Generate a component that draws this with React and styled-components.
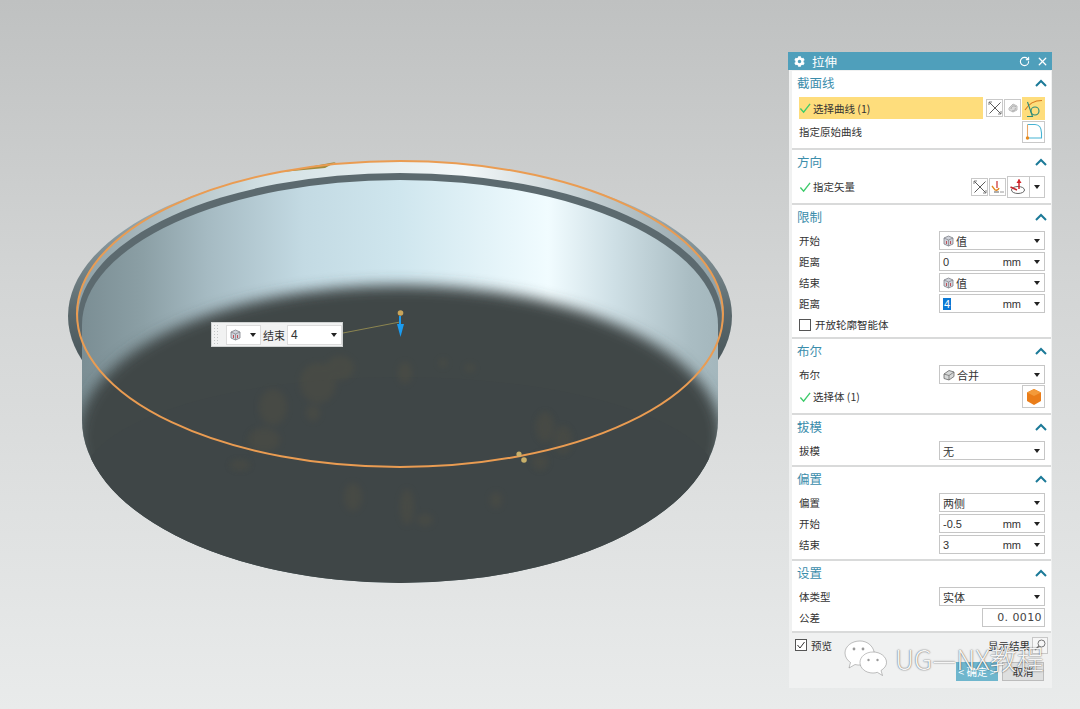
import React from 'react';
import styled, { createGlobalStyle } from 'styled-components';
import { RotateCw, X } from 'lucide-react';
import { FaCog } from 'react-icons/fa';

const Global = createGlobalStyle`
  html, body { margin: 0; padding: 0; overflow: hidden; }
  body { font-family: "Noto Sans CJK SC", "Liberation Sans", sans-serif; }
`;

const Viewport = styled.div`
  position: relative;
  width: 1080px;
  height: 709px;
  overflow: hidden;
  background: linear-gradient(180deg, #bfc1c1 0%, #d3d5d5 40%, #e9ebeb 100%);
`;

const ModelSvg = styled.svg`
  position: absolute;
  inset: 0;
`;

const FloatBar = styled.div`
  position: absolute;
  left: 211px;
  top: 322px;
  width: 132px;
  height: 25px;
  box-sizing: border-box;
  display: flex;
  align-items: center;
  gap: 2px;
  background: #f1f2f2;
  border: 1px solid #cfd2d2;
  font-size: 11px;
  color: #333;
`;

const Grip = styled.div`
  width: 6px;
  height: 21px;
  margin: 0 5px 0 1px;
  background-image: radial-gradient(#c3c6c6 1px, transparent 1px);
  background-size: 3px 3px;
`;

const FloatSelect = styled.div`
  width: ${p => p.$w}px;
  height: 20px;
  box-sizing: border-box;
  display: flex;
  align-items: center;
  justify-content: space-between;
  padding: 0 4px 0 3px;
  background: #fff;
  border: 1px solid #dcdcdc;
  font-family: "Liberation Sans", sans-serif;
  font-size: 12px;
`;

const FloatLabel = styled.span`
  white-space: nowrap;
`;

const Dialog = styled.div`
  position: absolute;
  left: 788px;
  top: 52px;
  width: 264px;
  color: #333;
  font-size: 10.5px;
`;

const TitleBar = styled.div`
  height: 18px;
  display: flex;
  align-items: center;
  gap: 7px;
  padding: 0 3px 0 6px;
  background: #4f9fbb;
  color: #fff;
  font-size: 12.5px;
`;

const TitleText = styled.span`
  flex: 1;
`;

const TitleTools = styled.div`
  display: flex;
  align-items: center;
  gap: 6px;
`;

const Panel = styled.div`
  margin-left: 1px;
  padding: 1px 1px 0 3px;
  background: #f0f1f1;
`;

const Section = styled.section`
  height: ${p => p.$h}px;
  box-sizing: border-box;
  padding: 0 6px 0 7px;
  background: #fff;
  border-bottom: 2px solid #d9dada;
`;

const Header = styled.div`
  height: 25px;
  box-sizing: border-box;
  padding-bottom: 2px;
  margin: 0 -2px;
  display: flex;
  align-items: center;
  justify-content: space-between;
  color: #3b8dab;
  font-size: 12.5px;
`;

const Row = styled.div`
  height: ${p => p.$h || 21}px;
  display: flex;
  align-items: center;
  justify-content: space-between;
`;

const Label = styled.span`
  display: flex;
  align-items: center;
  gap: 2px;
  white-space: nowrap;
`;

const Active = styled.div`
  width: 184px;
  height: 22px;
  display: flex;
  align-items: center;
  gap: 2px;
  background: #fedd7c;
`;

const Tools = styled.div`
  display: flex;
  align-items: center;
  gap: 1px;
`;

const Tool = styled.div`
  width: ${p => p.$w || 17}px;
  height: ${p => p.$tall || 18}px;
  box-sizing: border-box;
  display: flex;
  align-items: center;
  justify-content: center;
  background: ${p => (p.$on ? '#fedd7c' : '#fff')};
  border: 1px solid ${p => (p.$on ? '#fedd7c' : '#c9c9c9')};
`;

const Split = styled.div`
  width: 38px;
  height: 22px;
  box-sizing: border-box;
  display: flex;
  align-items: center;
  border: 1px solid #c9c9c9;
`;

const SplitMain = styled.div`
  width: 21px;
  height: 100%;
  display: flex;
  align-items: center;
  justify-content: center;
  border-right: 1px solid #c9c9c9;
`;

const SplitCaret = styled.div`
  flex: 1;
  display: flex;
  justify-content: center;
`;

const Field = styled.div`
  width: ${p => p.$w || 106}px;
  height: 19px;
  box-sizing: border-box;
  display: flex;
  align-items: center;
  gap: 2px;
  padding: 0 4px 0 3px;
  background: #fff;
  border: 1px solid #c6c6c6;
  font-size: 10.5px;
`;

const Value = styled.span`
  flex: 1;
  font-family: "Liberation Sans", "Noto Sans CJK SC", sans-serif;
  font-size: 11px;
`;

const Selected = styled.span`
  background: #0b78d4;
  color: #fff;
  padding: 0 1px;
`;

const Unit = styled.span`
  margin-right: 11px;
  font-family: "Liberation Sans", sans-serif;
  font-size: 11px;
`;

const Caret = styled.i`
  width: 0;
  height: 0;
  border-left: 3px solid transparent;
  border-right: 3px solid transparent;
  border-top: 4px solid #222;
`;

const Tolerance = styled(Field)`
  justify-content: flex-end;
  padding-right: 2px;
  font-family: "DejaVu Sans", sans-serif;
  font-size: 11px;
  color: #444;
  letter-spacing: 0.4px;
`;

const CheckBox = styled.span`
  width: 12px;
  height: 12px;
  box-sizing: border-box;
  display: inline-flex;
  align-items: center;
  justify-content: center;
  background: #fff;
  border: 1px solid #555;
  margin-right: 2px;
`;

const Footer = styled.div`
  height: 55px;
  padding: 3px 3px 0 3px;
  box-sizing: border-box;
`;

const FooterTop = styled.div`
  height: 18px;
  display: flex;
  align-items: center;
  justify-content: space-between;
`;

const ResultLink = styled.div`
  display: flex;
  align-items: center;
  gap: 2px;
`;

const FooterButtons = styled.div`
  margin: 8px 4px 0 0;
  display: flex;
  justify-content: flex-end;
  gap: 4px;
`;

const Button = styled.div`
  width: 42px;
  height: 19px;
  box-sizing: border-box;
  display: flex;
  align-items: center;
  justify-content: center;
  background: ${p => (p.$primary ? '#6fb6cd' : '#dedfdf')};
  border: 1px solid ${p => (p.$primary ? '#6fb6cd' : '#bcbcbc')};
  color: ${p => (p.$primary ? '#fff' : '#333')};
`;

const Watermark = styled.div`
  position: absolute;
  left: 844px;
  top: 638px;
  display: flex;
  align-items: center;
  gap: 7px;
`;

const WatermarkText = styled.span`
  color: rgba(255, 255, 255, 0.95);
  font-size: 27px;
  font-weight: 300;
  line-height: 42px;
  white-space: nowrap;
  text-shadow: 0 0 1.5px rgba(0, 0, 0, 0.8);
`;

const Check = () => (
  <svg width="12" height="12" viewBox="0 0 13 12">
    <path d="M1.5 6.5 L5 10.5 L12 1.5" fill="none" stroke="#3ecb6b" strokeWidth="1.5" />
  </svg>
);

const Chevron = () => (
  <svg width="12" height="8" viewBox="0 0 12 8">
    <path d="M1 7 L6 2 L11 7" fill="none" stroke="#1c7a98" strokeWidth="2" />
  </svg>
);

const ValueIcon = () => (
  <svg width="11" height="12" viewBox="0 0 11 12">
    <path d="M5.5 1 L10 3 V9 L5.5 11 L1 9 V3 Z" fill="#cfd2da" stroke="#7e8088" strokeWidth="0.8" />
    <path d="M1 3 L5.5 5 L10 3 M5.5 5 V11" fill="none" stroke="#7e8088" strokeWidth="0.7" />
    <path d="M3.5 6 V9 M7.5 6 V9" stroke="#c0424a" strokeWidth="0.9" />
  </svg>
);

const UniteIcon = () => (
  <svg width="12" height="12" viewBox="0 0 12 12">
    <path d="M1 5 L6 1.5 L11 3 V7.5 L6 11 L1 9.5 Z" fill="#d6d8d8" stroke="#666" strokeWidth="0.8" />
    <path d="M1 5 L6 6.5 L11 3 M6 6.5 V11" fill="none" stroke="#666" strokeWidth="0.7" />
  </svg>
);

const CrossIcon = () => (
  <svg width="14" height="14" viewBox="0 0 14 14">
    <path d="M1.5 1.5 L12.5 12.5 M12.5 1.5 L1.5 12.5" stroke="#4a4a4a" strokeWidth="0.9" />
    <path d="M1 4 V1 H4 M10 13 H13 V10" fill="none" stroke="#4a4a4a" strokeWidth="0.7" />
  </svg>
);

const LayerIcon = () => (
  <svg width="12" height="12" viewBox="0 0 12 12">
    <path d="M2 6 L6 2 L10 4 V8 L6 10 L2 8 Z" fill="#dadada" stroke="#bdbdbd" />
    <path d="M4 7 C4 4 7 3 9 5 M5 9 C8 9 9 7 8 6" fill="none" stroke="#a8a8a8" />
  </svg>
);

const CurveIcon = () => (
  <svg width="21" height="21" viewBox="0 0 21 21">
    <circle cx="12" cy="13" r="4" fill="none" stroke="#2d8a7a" strokeWidth="1.1" />
    <path d="M2 12 C6 5 12 2.5 19 2.5" fill="none" stroke="#d97a20" strokeWidth="1.1" />
    <path d="M4.5 4 L9.5 18.5 H4" fill="none" stroke="#2d8a7a" strokeWidth="1.1" />
  </svg>
);

const OriginIcon = () => (
  <svg width="20" height="20" viewBox="0 0 20 20">
    <path d="M3.5 2.5 H11 C15 2.5 17.5 6 17.5 11 V16 H3.5" fill="none" stroke="#46b3d3" strokeWidth="1.1" />
    <path d="M3.5 2.5 V16" stroke="#e9a765" strokeWidth="1.1" />
    <circle cx="3.5" cy="16" r="1.7" fill="#e78a1f" />
  </svg>
);

const OrientIcon = () => (
  <svg width="13" height="14" viewBox="0 0 13 14">
    <path d="M6 1 V8" stroke="#cc2b2b" strokeWidth="1.2" />
    <path d="M1 6 L4 10 Q7 11 8 8" fill="none" stroke="#e2861c" strokeWidth="1.3" />
    <path d="M3 12 H8" stroke="#333" strokeWidth="0.8" />
    <path d="M9.5 12 H10.5 M11.5 12 H12.5" stroke="#333" />
  </svg>
);

const VectorIcon = () => (
  <svg width="19" height="19" viewBox="0 0 19 19">
    <ellipse cx="9" cy="13" rx="6.5" ry="3.5" fill="none" stroke="#555" strokeWidth="0.9" />
    <path d="M10 12 V2.5" stroke="#d0262c" strokeWidth="1.5" />
    <path d="M7.5 6 L10 2 L12.5 6 Z" fill="#d0262c" />
    <path d="M1.5 10 L8 13" stroke="#c7262c" strokeWidth="1.6" />
  </svg>
);

const SolidIcon = () => (
  <svg width="18" height="18" viewBox="0 0 18 18">
    <path d="M9 1 L16 4.5 V13 L9 17 L2 13 V4.5 Z" fill="#ea7d19" />
    <path d="M2 4.5 L9 8 L16 4.5 L9 1 Z" fill="#f39a3a" />
  </svg>
);

const Tick = () => (
  <svg width="10" height="10" viewBox="0 0 10 10">
    <path d="M1.5 5 L4 8 L8.5 2" fill="none" stroke="#333" strokeWidth="1" />
  </svg>
);

const Magnifier = () => (
  <svg width="16" height="17" viewBox="0 0 16 17">
    <rect x="0.5" y="0.5" width="15" height="16" fill="#f6f6f6" stroke="#c8c8c8" />
    <circle cx="9.5" cy="6.5" r="3.5" fill="none" stroke="#777" />
    <path d="M7 9 L3 13" stroke="#777" strokeWidth="1.4" />
  </svg>
);

const WeChat = () => (
  <svg width="44" height="42" viewBox="0 0 44 42">
    <g fill="rgba(255,255,255,0.96)" stroke="rgba(80,80,80,0.5)" strokeWidth="0.7">
      <path d="M16 3 C7.5 3 1 8.5 1 15 C1 19 3.3 22.3 6.5 24.5 L5 30 L11 26.5 C13 27 15 27.2 17 27 L30 13.5 C28.5 7.5 23 3 16 3 Z" />
      <path d="M29 14 C21.5 14 16 18.8 16 24.5 C16 30.2 21.5 35 29 35 C30.5 35 32 34.8 33.3 34.3 L38.5 37.5 L37 32.5 C40.5 30.3 42.5 27.6 42.5 24.5 C42.5 18.8 36.5 14 29 14 Z" />
    </g>
    <g fill="#9a9a9a">
      <circle cx="10" cy="11" r="1.4" />
      <circle cx="19" cy="11" r="1.4" />
      <circle cx="24.5" cy="22" r="1.2" />
      <circle cx="33.5" cy="22" r="1.2" />
    </g>
  </svg>
);

const stains = [
  [318, 383, 18, 20], [340, 368, 14, 12], [273, 407, 14, 18], [264, 440, 16, 12],
  [313, 413, 7, 8], [405, 373, 7, 11], [443, 363, 4, 4], [470, 368, 5, 4],
  [545, 427, 9, 15], [563, 440, 9, 14], [540, 462, 8, 8], [353, 497, 9, 14],
  [407, 507, 7, 18], [425, 520, 8, 6], [496, 500, 6, 8], [240, 465, 10, 5],
];

const Model = () => (
  <ModelSvg width="1080" height="709" viewBox="0 0 1080 709">
    <defs>
      <linearGradient id="wall" x1="78" x2="722" y1="0" y2="0" gradientUnits="userSpaceOnUse">
        <stop offset="0" stopColor="#7a8d93" />
        <stop offset="0.1" stopColor="#8b9fa5" />
        <stop offset="0.2" stopColor="#a5bac2" />
        <stop offset="0.35" stopColor="#c3dae3" />
        <stop offset="0.5" stopColor="#cfe6ee" />
        <stop offset="0.73" stopColor="#f1fcff" />
        <stop offset="0.83" stopColor="#cfe0e6" />
        <stop offset="0.95" stopColor="#aabdc3" />
        <stop offset="1" stopColor="#a3b6bc" />
      </linearGradient>
      <linearGradient id="flange" x1="0" x2="0" y1="162" y2="360" gradientUnits="userSpaceOnUse">
        <stop offset="0" stopColor="#c4d0d3" />
        <stop offset="0.35" stopColor="#8c9ca1" />
        <stop offset="0.75" stopColor="#5b696d" />
        <stop offset="1" stopColor="#4a575b" />
      </linearGradient>
      <linearGradient id="rim" x1="70" x2="730" y1="0" y2="0" gradientUnits="userSpaceOnUse">
        <stop offset="0" stopColor="#8c9ea4" />
        <stop offset="0.3" stopColor="#d3e1e4" />
        <stop offset="0.6" stopColor="#f2f7f8" />
        <stop offset="1" stopColor="#8c9ea4" />
      </linearGradient>
      <filter id="soft" x="-10%" y="-10%" width="120%" height="120%">
        <feGaussianBlur stdDeviation="7" />
      </filter>
      <filter id="stain" x="-50%" y="-50%" width="200%" height="200%">
        <feGaussianBlur stdDeviation="3" />
      </filter>
      <clipPath id="body">
        <path d="M82 325 A318 145 0 0 1 718 325 V420 A318 163 0 0 1 82 420 Z" />
      </clipPath>
    </defs>

    <ellipse cx="400" cy="316" rx="332" ry="154" fill="url(#flange)" />
    <ellipse cx="400" cy="314" rx="323" ry="153" fill="url(#rim)" />
    <ellipse cx="400" cy="319" rx="322" ry="146" fill="#5c6a6f" />

    <g clipPath="url(#body)">
      <rect x="70" y="170" width="660" height="420" fill="url(#wall)" />
      <ellipse cx="400" cy="437" rx="322" ry="152" fill="#3f4647" filter="url(#soft)" />
      <ellipse cx="400" cy="480" rx="317" ry="103" fill="#3f4647" />
      <g fill="#5c5540" opacity="0.28" filter="url(#stain)">
        {stains.map(([cx, cy, rx, ry]) => (
          <ellipse key={`${cx}-${cy}`} cx={cx} cy={cy} rx={rx} ry={ry} />
        ))}
      </g>
    </g>

    <path d="M282 172 L330 163 L336 162 L325 168 Z" fill="#a08a3c" />
    <ellipse cx="400" cy="314" rx="323" ry="153" fill="none" stroke="#ea9c52" strokeWidth="2" />

    <path d="M343 333 L400 322" stroke="#8c8550" strokeWidth="1" />
    <path d="M400 316 V326" stroke="#1b9cf0" strokeWidth="2" />
    <path d="M397 324 H404 L400.5 337 Z" fill="#1b9cf0" />
    <circle cx="400.5" cy="313" r="2.8" fill="#c8a45a" />
    <circle cx="519" cy="454" r="2.6" fill="#c9b06a" />
    <circle cx="524" cy="460" r="2.8" fill="#c9b06a" />
  </ModelSvg>
);

const Select = ({ icon, children, w }) => (
  <Field $w={w}>
    {icon}
    <Value>{children}</Value>
    <Caret />
  </Field>
);

const Measure = ({ value, selected }) => (
  <Field>
    <Value>{selected ? <Selected>{value}</Selected> : value}</Value>
    <Unit>mm</Unit>
    <Caret />
  </Field>
);

const Head = ({ children }) => (
  <Header>
    {children}
    <Chevron />
  </Header>
);

export default function App() {
  return (
    <Viewport>
      <Global />
      <Model />

      <FloatBar>
        <Grip />
        <FloatSelect $w={35}>
          <ValueIcon />
          <Caret />
        </FloatSelect>
        <FloatLabel>结束</FloatLabel>
        <FloatSelect $w={55}>
          4
          <Caret />
        </FloatSelect>
      </FloatBar>

      <Dialog>
        <TitleBar>
          <FaCog size={11} />
          <TitleText>拉伸</TitleText>
          <TitleTools>
            <RotateCw size={11} strokeWidth={2.4} />
            <X size={13} strokeWidth={2.4} />
          </TitleTools>
        </TitleBar>

        <Panel>
          <Section $h={79}>
            <Head>截面线</Head>
            <Row $h={24}>
              <Active>
                <Check />
                <span>选择曲线 (1)</span>
              </Active>
              <Tools>
                <Tool><CrossIcon /></Tool>
                <Tool><LayerIcon /></Tool>
                <Tool $on $w={23} $tall={23}><CurveIcon /></Tool>
              </Tools>
            </Row>
            <Row $h={23}>
              <Label>指定原始曲线</Label>
              <Tool $w={23} $tall={22}><OriginIcon /></Tool>
            </Row>
          </Section>

          <Section $h={55}>
            <Head>方向</Head>
            <Row $h={23}>
              <Label><Check />指定矢量</Label>
              <Tools>
                <Tool><CrossIcon /></Tool>
                <Tool><OrientIcon /></Tool>
                <Split>
                  <SplitMain><VectorIcon /></SplitMain>
                  <SplitCaret><Caret /></SplitCaret>
                </Split>
              </Tools>
            </Row>
          </Section>

          <Section $h={134}>
            <Head>限制</Head>
            <Row><Label>开始</Label><Select icon={<ValueIcon />}>值</Select></Row>
            <Row><Label>距离</Label><Measure value="0" /></Row>
            <Row><Label>结束</Label><Select icon={<ValueIcon />}>值</Select></Row>
            <Row><Label>距离</Label><Measure value="4" selected /></Row>
            <Row><Label><CheckBox />开放轮廓智能体</Label></Row>
          </Section>

          <Section $h={76}>
            <Head>布尔</Head>
            <Row><Label>布尔</Label><Select icon={<UniteIcon />}>合并</Select></Row>
            <Row $h={23}>
              <Label><Check />选择体 (1)</Label>
              <Tool $w={23} $tall={23}><SolidIcon /></Tool>
            </Row>
          </Section>

          <Section $h={52}>
            <Head>拔模</Head>
            <Row><Label>拔模</Label><Select>无</Select></Row>
          </Section>

          <Section $h={94}>
            <Head>偏置</Head>
            <Row><Label>偏置</Label><Select>两侧</Select></Row>
            <Row><Label>开始</Label><Measure value="-0.5" /></Row>
            <Row><Label>结束</Label><Measure value="3" /></Row>
          </Section>

          <Section $h={72}>
            <Head>设置</Head>
            <Row><Label>体类型</Label><Select>实体</Select></Row>
            <Row><Label>公差</Label><Tolerance $w={63}>0. 0010</Tolerance></Row>
          </Section>

          <Footer>
            <FooterTop>
              <Label><CheckBox><Tick /></CheckBox>预览</Label>
              <ResultLink>显示结果<Magnifier /></ResultLink>
            </FooterTop>
            <FooterButtons>
              <Button $primary>&lt; 确定 &gt;</Button>
              <Button>取消</Button>
            </FooterButtons>
          </Footer>
        </Panel>
      </Dialog>

      <Watermark>
        <WeChat />
        <WatermarkText>UG—NX教程</WatermarkText>
      </Watermark>
    </Viewport>
  );
}
